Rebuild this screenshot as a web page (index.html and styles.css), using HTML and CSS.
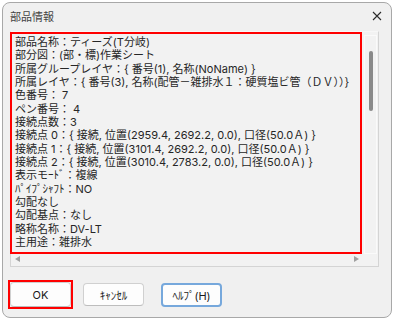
FILE: index.html
```html
<!DOCTYPE html>
<html lang="ja">
<head>
<meta charset="UTF-8" />
<title>部品情報</title>
<link rel="stylesheet" href="styles.css">
</head>
<body>

<div class="dialog">
  <div class="titlebar">
    <span class="title">部品情報</span>
    <svg class="close" width="10" height="10" viewBox="0 0 10 10">
      <path d="M1 1 L9 9 M9 1 L1 9" stroke="#2b2b2b" stroke-width="1.1" fill="none" />
    </svg>
  </div>

  <div class="viewer">
    <ul class="info-list">
      <li>部品名称：ティーズ(T分岐)</li>
      <li>部分図：(部・標)作業シート</li>
      <li>所属グループレイヤ：{ 番号(1), 名称(NoName) }</li>
      <li>所属レイヤ：{ 番号(3), 名称(配管－雑排水１：硬質塩ビ管（ＤＶ））}</li>
      <li>色番号： 7</li>
      <li>ペン番号： 4</li>
      <li>接続点数：3</li>
      <li>接続点 0：{ 接続, 位置(2959.4, 2692.2, 0.0), 口径(50.0Ａ) }</li>
      <li>接続点 1：{ 接続, 位置(3101.4, 2692.2, 0.0), 口径(50.0Ａ) }</li>
      <li>接続点 2：{ 接続, 位置(3010.4, 2783.2, 0.0), 口径(50.0Ａ) }</li>
      <li>表示モｰﾄﾞ：複線</li>
      <li>ﾊﾟｲﾌﾟｼｬﾌﾄ：NO</li>
      <li>勾配なし</li>
      <li>勾配基点：なし</li>
      <li>略称名称：DV-LT</li>
      <li>主用途：雑排水</li>
    </ul>
    <div class="vscroll"><div class="thumb"></div></div>
    <div class="hscroll">
      <span class="arrow left"></span>
      <span class="arrow right"></span>
    </div>
    <div class="corner"></div>
  </div>

  <div class="buttons">
    <div class="focus-mark"><button class="btn">OK</button></div>
    <button class="btn">ｷｬﾝｾﾙ</button>
    <button class="btn default">ﾍﾙﾌﾟ(H)</button>
  </div>
</div>

</body>
</html>
```

FILE: styles.css
```css
body {
  margin: 0;
  padding: 0;
  background: #ffffff;
  font-family: Inter, "Noto Sans CJK JP", sans-serif;
  color: #222;
}
.dialog {
  margin: 2px;
  width: 388px;
  height: 314px;
  background: #f0f0f0;
  border: 1px solid #a8a8a8;
  border-radius: 8px;
  display: flex;
  flex-direction: column;
}
.titlebar {
  height: 30px;
  display: flex;
  align-items: center;
  justify-content: space-between;
  padding: 0 9px 0 7px;
  margin-top: -2px;
}
.title {
  font-size: 11px;
  color: #444;
}
.close {
  display: block;
}
.viewer {
  margin-left: 7px;
  width: 369px;
  height: 236px;
  border: 1px solid #d4d4d4;
  border-top-color: #f7f7f7;
  display: grid;
  grid-template-columns: 351px 1fr;
  grid-template-rows: 222px 1fr;
  box-sizing: border-box;
  background: #f2f2f2;
}
.info-list {
  list-style: none;
  margin: 0 0 0 -1px;
  padding: 2px 0 0 3px;
  border: 2px solid #ff0000;
  box-sizing: border-box;
  overflow: hidden;
  font-size: 11px;
  line-height: 13.33px;
  white-space: nowrap;
  color: #262626;
}
.vscroll {
  margin: 3px 1px 0 2px;
  border: 1px solid #fafafa;
  display: flex;
  justify-content: center;
  padding-top: 15px;
}
.thumb {
  width: 4px;
  height: 60px;
  background: #8a8a8a;
  border-radius: 2px;
}
.hscroll {
  display: flex;
  justify-content: space-between;
  align-items: center;
  padding: 0 3px 2px 4px;
}
.arrow {
  width: 0;
  height: 0;
  border-top: 3px solid transparent;
  border-bottom: 3px solid transparent;
}
.arrow.left {
  border-right: 5px solid #a0a0a0;
}
.arrow.right {
  border-left: 5px solid #a0a0a0;
}
.buttons {
  display: flex;
  align-items: center;
  margin-top: 13px;
  padding-left: 5px;
}
.focus-mark {
  border: 2px solid #ff0000;
  display: flex;
  width: 65px;
  height: 29px;
  box-sizing: border-box;
  align-items: center;
  justify-content: center;
}
.btn {
  font-family: Inter, "Noto Sans CJK JP", sans-serif;
  font-size: 11px;
  width: 61px;
  height: 23px;
  padding: 0;
  background: #fdfdfd;
  border: 1px solid #d0d0d0;
  border-bottom-color: #bdbdbd;
  border-radius: 4px;
  color: #1a1a1a;
  margin-left: 10px;
}
.focus-mark .btn {
  margin-left: 0;
  height: 25px;
}
.btn.default {
  margin-left: 17px;
  border: 2px solid #76a8dc;
  height: 24px;
}
```
